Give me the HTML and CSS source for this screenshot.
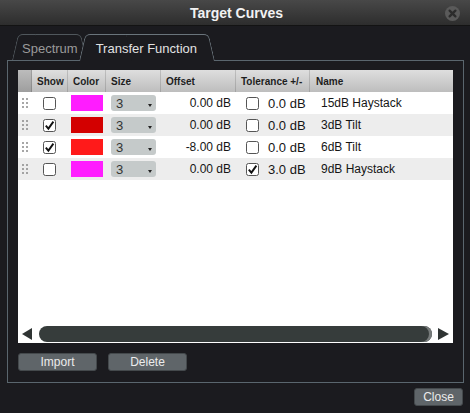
FILE: index.html
```html
<!DOCTYPE html>
<html>
<head>
<meta charset="utf-8">
<link rel="stylesheet" href="styles.css">
</head>
<body>
<div class="window">
  <div class="titlebar">
    <h1 class="title">Target Curves</h1>
    <svg class="close-x" viewBox="0 0 15 15"><circle cx="7.5" cy="7.5" r="7.5" fill="#5a5a5a"/><path d="M4.6 4.6 10.4 10.4 M10.4 4.6 4.6 10.4" stroke="#2c2c2c" stroke-width="2.3" stroke-linecap="round"/></svg>
  </div>
  <div class="content">
    <div class="tabs">
      <div class="tab">Spectrum</div>
      <div class="tab active">Transfer Function</div>
    </div>
    <div class="panel">
      <div class="table">
        <div class="row head">
          <div class="hc grip-h"></div>
          <div class="hc">Show</div>
          <div class="hc">Color</div>
          <div class="hc">Size</div>
          <div class="hc">Offset</div>
          <div class="hc">Tolerance +/-</div>
          <div class="hc">Name</div>
        </div>

        <div class="row">
          <div class="c grip"><svg viewBox="0 0 7 11" class="dots"><g fill="#8a8a8a"><circle cx="1" cy="1" r="1"/><circle cx="5" cy="1" r="1"/><circle cx="1" cy="5" r="1"/><circle cx="5" cy="5" r="1"/><circle cx="1" cy="9" r="1"/><circle cx="5" cy="9" r="1"/></g></svg></div>
          <div class="c show"><svg class="cb" viewBox="0 0 13 13"><rect x="0.5" y="0.5" width="12" height="12" rx="2" fill="#fff" stroke="#555"/></svg></div>
          <div class="c"><span class="swatch magenta"></span></div>
          <div class="c"><span class="select"><span>3</span><i class="caret"></i></span></div>
          <div class="c offset">0.00 dB</div>
          <div class="c tol"><svg class="cb" viewBox="0 0 13 13"><rect x="0.5" y="0.5" width="12" height="12" rx="2" fill="#fff" stroke="#555"/></svg><span>0.0 dB</span></div>
          <div class="c name">15dB Haystack</div>
        </div>

        <div class="row alt">
          <div class="c grip"><svg viewBox="0 0 7 11" class="dots"><g fill="#8a8a8a"><circle cx="1" cy="1" r="1"/><circle cx="5" cy="1" r="1"/><circle cx="1" cy="5" r="1"/><circle cx="5" cy="5" r="1"/><circle cx="1" cy="9" r="1"/><circle cx="5" cy="9" r="1"/></g></svg></div>
          <div class="c show"><svg class="cb" viewBox="0 0 13 13"><rect x="0.5" y="0.5" width="12" height="12" rx="2" fill="#fff" stroke="#555"/><path d="M2.8 6.6 5.4 9.6 10.4 2.6" fill="none" stroke="#111" stroke-width="1.9"/></svg></div>
          <div class="c"><span class="swatch red"></span></div>
          <div class="c"><span class="select"><span>3</span><i class="caret"></i></span></div>
          <div class="c offset">0.00 dB</div>
          <div class="c tol"><svg class="cb" viewBox="0 0 13 13"><rect x="0.5" y="0.5" width="12" height="12" rx="2" fill="#fff" stroke="#555"/></svg><span>0.0 dB</span></div>
          <div class="c name">3dB Tilt</div>
        </div>

        <div class="row">
          <div class="c grip"><svg viewBox="0 0 7 11" class="dots"><g fill="#8a8a8a"><circle cx="1" cy="1" r="1"/><circle cx="5" cy="1" r="1"/><circle cx="1" cy="5" r="1"/><circle cx="5" cy="5" r="1"/><circle cx="1" cy="9" r="1"/><circle cx="5" cy="9" r="1"/></g></svg></div>
          <div class="c show"><svg class="cb" viewBox="0 0 13 13"><rect x="0.5" y="0.5" width="12" height="12" rx="2" fill="#fff" stroke="#555"/><path d="M2.8 6.6 5.4 9.6 10.4 2.6" fill="none" stroke="#111" stroke-width="1.9"/></svg></div>
          <div class="c"><span class="swatch bright"></span></div>
          <div class="c"><span class="select"><span>3</span><i class="caret"></i></span></div>
          <div class="c offset">-8.00 dB</div>
          <div class="c tol"><svg class="cb" viewBox="0 0 13 13"><rect x="0.5" y="0.5" width="12" height="12" rx="2" fill="#fff" stroke="#555"/></svg><span>0.0 dB</span></div>
          <div class="c name">6dB Tilt</div>
        </div>

        <div class="row alt">
          <div class="c grip"><svg viewBox="0 0 7 11" class="dots"><g fill="#8a8a8a"><circle cx="1" cy="1" r="1"/><circle cx="5" cy="1" r="1"/><circle cx="1" cy="5" r="1"/><circle cx="5" cy="5" r="1"/><circle cx="1" cy="9" r="1"/><circle cx="5" cy="9" r="1"/></g></svg></div>
          <div class="c show"><svg class="cb" viewBox="0 0 13 13"><rect x="0.5" y="0.5" width="12" height="12" rx="2" fill="#fff" stroke="#555"/></svg></div>
          <div class="c"><span class="swatch magenta"></span></div>
          <div class="c"><span class="select"><span>3</span><i class="caret"></i></span></div>
          <div class="c offset">0.00 dB</div>
          <div class="c tol"><svg class="cb" viewBox="0 0 13 13"><rect x="0.5" y="0.5" width="12" height="12" rx="2" fill="#fff" stroke="#555"/><path d="M2.8 6.6 5.4 9.6 10.4 2.6" fill="none" stroke="#111" stroke-width="1.9"/></svg><span>3.0 dB</span></div>
          <div class="c name">9dB Haystack</div>
        </div>

        <div class="spacer"></div>
        <div class="hscroll">
          <i class="arrow left"></i>
          <div class="track"></div>
          <i class="arrow right"></i>
        </div>
      </div>
      <div class="actions">
        <button class="btn wide">Import</button>
        <button class="btn wide">Delete</button>
      </div>
    </div>
    <div class="footer">
      <button class="btn close">Close</button>
    </div>
  </div>
</div>
</body>
</html>
```

FILE: styles.css
```css
* { box-sizing: border-box; }
html, body { margin: 0; padding: 0; }
body {
  background: #1b1b1f;
  font-family: "Liberation Sans", Arial, sans-serif;
  width: 470px;
  height: 413px;
  overflow: hidden;
}

.titlebar {
  height: 26px;
  border-bottom: 1px solid #131313;
  background: linear-gradient(#484848, #2d2d2d);
  display: grid;
  grid-template-columns: 1fr auto 1fr;
  align-items: center;
}
.title {
  grid-column: 2;
  margin: 0;
  padding-left: 3px;
  font-size: 14px;
  font-weight: bold;
  color: #f2f2f2;
}
.close-x {
  grid-column: 3;
  justify-self: end;
  margin: 1px 10px 0 0;
  width: 15px;
  height: 15px;
}

.content { padding: 8px 6px 0 7px; }

.tabs {
  display: flex;
  align-items: flex-start;
  height: 26px;
  padding-left: 5px;
}
.tab {
  position: relative;
  z-index: 1;
  height: 26px;
  padding: 3px 10px 0 10px;
  display: flex;
  align-items: center;
  font-size: 13px;
  color: #9a9a9a;
}
.tab::before,
.tab::after {
  content: "";
  position: absolute;
  top: 0;
  bottom: 0;
  width: 60%;
  z-index: -1;
  background: #1b1b1f;
  border-top: 1px solid #50575c;
}
.tab::before {
  left: 0;
  border-left: 1px solid #50575c;
  border-top-left-radius: 5px;
  transform: skewX(-13deg);
  transform-origin: bottom left;
}
.tab::after {
  right: 0;
  border-right: 1px solid #50575c;
  border-top-right-radius: 5px;
  transform: skewX(13deg);
  transform-origin: bottom right;
}
.tab.active {
  z-index: 2;
  height: 27px;
  margin-bottom: -1px;
  margin-left: -9px;
  padding: 2px 18px 0 17px;
  color: #e2e2e2;
}
.tab.active::before,
.tab.active::after { border-color: #6a747b; }

.panel {
  border: 1px solid #5a666e;
  padding: 9px 10px 11px 10px;
}

.table {
  height: 273px;
  background: #fff;
  display: flex;
  flex-direction: column;
}
.row {
  display: grid;
  grid-template-columns: 14px 36px 38px 55px 75px 74px 1fr;
  height: 22px;
  align-items: center;
  font-size: 12px;
  color: #151515;
}
.row.alt { background: #ededed; }
.row.head {
  background: linear-gradient(#dedede, #bdbdbd);
  align-items: stretch;
}
.hc {
  display: flex;
  align-items: center;
  padding-left: 5px;
  font-size: 10px;
  font-weight: bold;
  color: #1e1e1e;
  border-right: 1px solid rgba(0,0,0,0.14);
}
.hc:last-child { border-right: none; padding-left: 6px; }
.hc.grip-h { background: linear-gradient(#bcbcbc, #9e9e9e); }

.c { display: flex; align-items: center; height: 100%; }
.grip { justify-content: center; padding-left: 1px; }
.dots { width: 7px; height: 11px; }
.show { justify-content: center; padding-right: 1px; }
.cb { width: 13px; height: 13px; flex: none; }

.swatch {
  display: block;
  width: 32px;
  height: 16px;
  margin-left: 3px;
}
.magenta { background: #ff1cff; }
.red { background: #d30000; }
.bright { background: #ff1a1a; }

.select {
  margin-left: 5px;
  width: 45px;
  height: 16px;
  border-radius: 3px;
  background: #c5caca;
  display: flex;
  align-items: center;
  justify-content: space-between;
  padding: 0 4px 0 5px;
  font-size: 13px;
  color: #333;
}
.caret {
  display: block;
  width: 0;
  height: 0;
  margin-top: 4px;
  border-left: 2.5px solid transparent;
  border-right: 2.5px solid transparent;
  border-top: 3px solid #222;
}

.offset { justify-content: flex-end; padding-right: 5px; }
.tol { padding-left: 10px; gap: 9px; font-size: 13px; }
.name { padding-left: 11px; font-size: 12px; }

.spacer { flex: 1; }
.hscroll {
  height: 16px;
  margin-bottom: 1px;
  display: flex;
  align-items: center;
  padding: 0 4px;
}
.arrow {
  display: block;
  width: 0;
  height: 0;
  border-top: 6.5px solid transparent;
  border-bottom: 6.5px solid transparent;
}
.arrow.left { border-right: 10px solid #2f3433; margin-right: 7px; }
.arrow.right { border-left: 11px solid #2f3433; margin-left: 6px; }
.track {
  flex: 1;
  height: 16px;
  border-radius: 8px;
  background: #363c3b;
  box-shadow: inset -3px 0 0 #767a7a;
}

.actions {
  margin-top: 10px;
  display: flex;
  gap: 11px;
}
.btn {
  height: 18px;
  padding: 0;
  border: 1px solid #44494c;
  border-radius: 3px;
  background: #5f6569;
  color: #ececec;
  font-family: "Liberation Sans", Arial, sans-serif;
  font-size: 12px;
  line-height: 16px;
}
.btn.wide { width: 79px; }
.footer {
  margin-top: 5px;
  display: flex;
  justify-content: flex-end;
}
.btn.close { width: 49px; margin-right: 1px; }
```
